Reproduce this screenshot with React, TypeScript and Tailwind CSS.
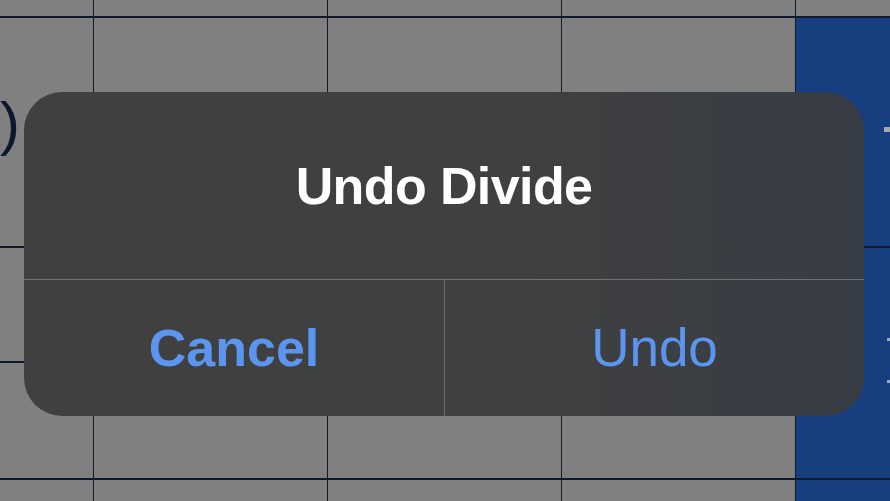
export default function App() {
  return (
    <div className="relative w-[890px] h-[501px] overflow-hidden bg-[#808080] font-['Liberation_Sans',Arial,sans-serif]">
      {/* Spreadsheet behind the alert */}
      <div className="grid h-full grid-cols-[93px_233px_233px_233px_1fr] grid-rows-[16px_228px_230px_1fr] gap-x-px gap-y-[2px] bg-[#101a2c]">
        {/* row 0 */}
        <div className="bg-[#808080]" />
        <div className="bg-[#808080]" />
        <div className="bg-[#808080]" />
        <div className="bg-[#808080]" />
        <div className="bg-[#808080]" />

        {/* row 1 */}
        <div className="bg-[#808080] overflow-hidden">
          <div className="mt-[76px] text-[60px] leading-none text-[#0b1830]">)</div>
        </div>
        <div className="bg-[#808080]" />
        <div className="bg-[#808080]" />
        <div className="bg-[#808080]" />
        <div className="bg-[#173e7f] overflow-hidden">
          <div className="ml-[88px] mt-[109px] w-[6px] h-[5px] bg-[#a3a9b4]" />
        </div>

        {/* row 2 */}
        <div className="bg-[#808080]">
          <div className="mt-[113px] h-[2px] w-full bg-[#0b1830]" />
        </div>
        <div className="bg-[#808080]" />
        <div className="bg-[#808080]" />
        <div className="bg-[#808080]" />
        <div className="bg-[#173e7f] overflow-hidden">
          <div className="ml-[91px] mt-[90px] w-[3px] h-[3px] bg-[#a3a9b4]" />
          <div className="ml-[91px] mt-[39px] w-[3px] h-[3px] bg-[#a3a9b4]" />
        </div>

        {/* row 3 */}
        <div className="bg-[#808080]" />
        <div className="bg-[#808080]" />
        <div className="bg-[#808080]" />
        <div className="bg-[#808080]" />
        <div className="bg-[#173e7f]" />
      </div>

      {/* Alert */}
      <div className="absolute left-[24px] top-[92px] w-[840px] h-[324px] rounded-[38px] overflow-hidden flex flex-col bg-gradient-to-r from-[#404040] via-[#3f4040] via-60% to-[#373c45]">
        <div className="h-[187px] flex items-center justify-center">
          <span className="text-[52px] font-bold text-white tracking-[-0.6px]">Undo Divide</span>
        </div>
        <div className="h-px bg-[#6f7072]" />
        <div className="flex-1 flex">
          <button className="w-[420px] flex items-center justify-center text-[52px] font-bold text-[#5c95f0]">
            Cancel
          </button>
          <div className="w-px bg-[#6f7072]" />
          <button className="flex-1 flex items-center justify-center text-[53px] text-[#5c95f0]">
            Undo
          </button>
        </div>
      </div>
    </div>
  )
}
